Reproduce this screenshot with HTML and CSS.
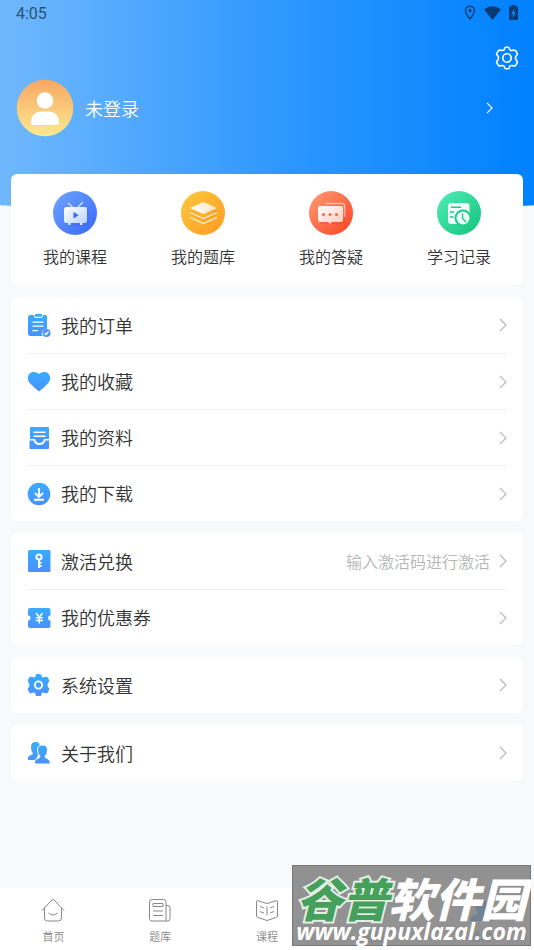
FILE: index.html
```html
<!DOCTYPE html>
<html lang="zh-CN">
<head>
<meta charset="utf-8">
<meta name="viewport" content="width=device-width, initial-scale=1">
<title>我的</title>
<link rel="stylesheet" href="styles.css">
</head>
<body>
<svg class="defs" aria-hidden="true">
  <defs>
    <linearGradient id="blue" x1="0" y1="0" x2="0" y2="24" gradientUnits="userSpaceOnUse"><stop offset="0" stop-color="#37adff"/><stop offset="1" stop-color="#4b8fff"/></linearGradient>
    <linearGradient id="avatar" x1="0" y1="0" x2="0" y2="1"><stop offset="0" stop-color="#f8a763"/><stop offset="1" stop-color="#fbea91"/></linearGradient>
    <linearGradient id="c1" x1="0" y1="0" x2="1" y2="1"><stop offset="0.1" stop-color="#6a9fff"/><stop offset="0.9" stop-color="#3d6dfc"/></linearGradient>
    <linearGradient id="c2" x1="0" y1="0" x2="1" y2="1"><stop offset="0.1" stop-color="#fdc43a"/><stop offset="0.9" stop-color="#ff9f26"/></linearGradient>
    <linearGradient id="c3" x1="0" y1="0" x2="1" y2="1"><stop offset="0.1" stop-color="#ff956c"/><stop offset="0.9" stop-color="#fb4a2b"/></linearGradient>
    <linearGradient id="c4" x1="0" y1="0" x2="1" y2="1"><stop offset="0.1" stop-color="#4be9b2"/><stop offset="0.9" stop-color="#18c880"/></linearGradient>
    <linearGradient id="w1" x1="0" y1="0" x2="1" y2="1"><stop offset="0" stop-color="#fff"/><stop offset="1" stop-color="#b9d2ff"/></linearGradient>
    <linearGradient id="w2" x1="0" y1="0" x2="1" y2="0"><stop offset="0" stop-color="#fff"/><stop offset="1" stop-color="#ffe3bd"/></linearGradient>
    <linearGradient id="w3" x1="0" y1="0" x2="1" y2="1"><stop offset="0" stop-color="#fff"/><stop offset="1" stop-color="#ffcabb"/></linearGradient>
    <symbol id="chevron" viewBox="0 0 8 14"><path d="M1 1l6 6-6 6" fill="none" stroke="currentColor" stroke-width="1.3"/></symbol>
  </defs>
</svg>

<header class="hero">
  <div class="status">
    <span>4:05</span>
    <span class="status-icons">
      <svg width="12" height="16" viewBox="0 0 12 16"><path d="M6 1.2C3.3 1.2 1.5 3.2 1.5 5.6 1.5 8.8 6 14 6 14s4.500-5.200 4.500-8.400C10.500 3.200 8.700 1.200 6 1.200z" fill="none" stroke="#063c73" stroke-width="1.400"/><circle cx="6" cy="5.600" r="1.600" fill="#063c73"/></svg>
      <svg width="17" height="16" viewBox="0 0 17 16"><path d="M0 4.500Q8.500-2 17 4.500L8.500 15z" fill="#063c73"/></svg>
      <svg width="9" height="16" viewBox="0 0 9 16"><path d="M2.500 1.500V0h4v1.500H8q1 0 1 1V14q0 1-1 1H1q-1 0-1-1V2.500q0-1 1-1z" fill="#063c73"/><path d="M5.500 3.500L2.200 9H4l-.500 4 3.300-5.500H5z" fill="#118aff"/></svg>
    </span>
  </div>
  <div class="toolbar">
    <button class="icon-button" aria-label="设置">
      <svg width="24" height="24" viewBox="0 0 24 24" fill="none" stroke="#fff" stroke-width="1.600" stroke-linejoin="round"><path d="M9.500 2.800Q9.700 1.200 11 1.200h2Q14.300 1.200 14.500 2.800 14.800 4.600 16.500 4.500L19 4.100Q20.300 4 21 5.200L22.200 7.300Q22.700 8.600 21.500 9.500 19.400 12 21.500 14.500 22.700 15.400 22.200 16.700L21 18.800Q20.300 20 19 19.900L16.500 19.500Q14.800 19.400 14.500 21.200 14.300 22.800 13 22.800H11Q9.700 22.800 9.500 21.200 9.200 19.400 7.500 19.500L5 19.900Q3.700 20 3 18.800L1.800 16.700Q1.300 15.400 2.500 14.500 4.600 12 2.500 9.500 1.300 8.600 1.800 7.300L3 5.200Q3.700 4 5 4.100L7.500 4.500Q9.200 4.600 9.500 2.800z"/><circle cx="12" cy="12" r="4.200"/></svg>
    </button>
  </div>
  <a class="profile" href="#login">
    <svg width="58" height="58" viewBox="0 0 58 58"><circle cx="29" cy="29" r="28.300" fill="url(#avatar)"/><circle cx="29" cy="21.500" r="8.300" fill="#fff"/><path d="M15 43.500C15 36 20 32.500 25 32.500h8c5 0 10 3.500 10 11q0 2.500-2.500 2.500h-23Q15 46 15 43.500z" fill="#fff"/></svg>
    <span class="name">未登录</span>
    <svg class="chevron" width="7" height="12"><use href="#chevron"/></svg>
  </a>
</header>

<main>
  <nav class="card shortcuts" aria-label="学习">
    <a href="#courses">
      <svg width="44" height="44" viewBox="0 0 44 44"><circle cx="22" cy="22" r="22" fill="url(#c1)"/><path d="M15 12l4.500 4M30 11l-5 5" stroke="#d9e6ff" stroke-width="1.200"/><rect x="13" y="18" width="23" height="17" rx="3" fill="#2c59e0" opacity=".25"/><rect x="11" y="16" width="23" height="16" rx="2" fill="url(#w1)"/><path d="M15 32h2.500v2H15zM27 32h2.500v2H27z" fill="#dce8ff"/><path d="M20.500 21v6.500l5.200-3.200z" fill="#3469f3"/></svg>
      <span>我的课程</span>
    </a>
    <a href="#questions">
      <svg width="44" height="44" viewBox="0 0 44 44"><circle cx="22" cy="22" r="22" fill="url(#c2)"/><path d="M9 19l13.500 8L36 19v4l-13.500 7L9 23z" fill="#e97c00" opacity=".25"/><path d="M22.500 11L36 17l-13.500 6L9 17z" fill="url(#w2)"/><path d="M9 21.500l13.500 6L36 21.500M9 26.500l13.500 6L36 26.500" fill="none" stroke="#fff2dd" stroke-width="1.300"/></svg>
      <span>我的题库</span>
    </a>
    <a href="#answers">
      <svg width="44" height="44" viewBox="0 0 44 44"><circle cx="22" cy="22" r="22" fill="url(#c3)"/><path d="M16 12.500h18q1.500 0 1.500 1.500v12" fill="none" stroke="#ffc0ae" stroke-width="1.500"/><rect x="11" y="17" width="25" height="16" rx="2" fill="#c92510" opacity=".15"/><path d="M11 15h21q2 0 2 2v12q0 2-2 2h-9l-2 2-2-2h-8q-2 0-2-2V17q0-2 2-2z" fill="url(#w3)"/><g fill="#f66445"><circle cx="14.500" cy="23.500" r="1.500"/><circle cx="21" cy="23.500" r="1.500"/><circle cx="27.500" cy="23.500" r="1.500"/></g></svg>
      <span>我的答疑</span>
    </a>
    <a href="#records">
      <svg width="44" height="44" viewBox="0 0 44 44"><circle cx="22" cy="22" r="22" fill="url(#c4)"/><rect x="11" y="12" width="21.500" height="21" rx="3" fill="#effff8"/><path d="M14 16.200h10M13 21h4M13 26h3.500" stroke="#20c98c" stroke-width="1.600"/><circle cx="26" cy="27" r="8.500" fill="#20cc8d"/><circle cx="26" cy="27" r="6.500" fill="#eafff6"/><path d="M25.500 22.500v5l3.500 3.500" fill="none" stroke="#20c98c" stroke-width="1.500"/></svg>
      <span>学习记录</span>
    </a>
  </nav>

  <section class="card list">
    <a class="row" href="#orders">
      <svg width="24" height="24" viewBox="0 0 24 24" fill="url(#blue)"><path d="M3.500 2H7q0 3 2 3h5q2 0 2-3h2.500Q20 2 20 3.500v12.300A4.700 4.700 0 0 0 15.500 23H3.500Q1 23 1 21V4q0-2 2.500-2z"/><path d="M8 1h2q1-1 3 0h2v2.800H8z"/><circle cx="19.500" cy="20" r="4"/><path d="M5.500 9.200h11M5.500 13.200h11M5.500 17.600H11M17.500 20l1.500 1.500 2.600-3" fill="none" stroke="#fff" stroke-width="1.300"/></svg>
      <span class="label">我的订单</span><svg class="chevron" width="8" height="14"><use href="#chevron"/></svg>
    </a>
    <a class="row" href="#favorites">
      <svg width="24" height="24" viewBox="0 0 24 24"><path d="M12 21.500Q8 18.500 3.200 13.500C-1.500 8.500 1.500 2 6.500 2Q10 2 12 4Q14 2 17.500 2C22.500 2 25.500 8.500 20.800 13.500Q16 18.500 12 21.500z" fill="url(#blue)"/></svg>
      <span class="label">我的收藏</span><svg class="chevron" width="8" height="14"><use href="#chevron"/></svg>
    </a>
    <a class="row" href="#materials">
      <svg width="24" height="24" viewBox="0 0 24 24" fill="url(#blue)"><path d="M4 1h17q1 0 1 1v11h-5q-1 4-4.500 4T8 13H3V2q0-1 1-1z"/><path d="M2.500 14.500H6.500Q8 19 12.500 19t6-4.500H22V22q0 1-1 1H3.500q-1 0-1-1z"/><path d="M6.500 6.200h12M6.500 10.200h12" stroke="#fff" stroke-width="1.500"/></svg>
      <span class="label">我的资料</span><svg class="chevron" width="8" height="14"><use href="#chevron"/></svg>
    </a>
    <a class="row" href="#downloads">
      <svg width="24" height="24" viewBox="0 0 24 24"><circle cx="12" cy="12" r="11.300" fill="url(#blue)"/><path d="M12 6v9M8 11l4 4 4-4M7 17.800h10" fill="none" stroke="#fff" stroke-width="1.900"/></svg>
      <span class="label">我的下载</span><svg class="chevron" width="8" height="14"><use href="#chevron"/></svg>
    </a>
  </section>

  <section class="card list">
    <a class="row" href="#activate">
      <svg width="24" height="24" viewBox="0 0 24 24"><rect x="1" y="1" width="22.500" height="22" rx="1.500" fill="url(#blue)"/><circle cx="12" cy="8" r="2.600" fill="none" stroke="#fff" stroke-width="2"/><path d="M12 10.500V19M12 13.800h2.500M12 17h2.500" fill="none" stroke="#fff" stroke-width="2"/></svg>
      <span class="label">激活兑换</span><span class="hint">输入激活码进行激活</span><svg class="chevron" width="8" height="14"><use href="#chevron"/></svg>
    </a>
    <a class="row" href="#coupons">
      <svg width="24" height="24" viewBox="0 0 24 24"><path d="M3 2h18.500q2 0 2 2v5.500a2.500 2.500 0 0 0 0 5V20q0 2-2 2H3q-2 0-2-2v-5.500a2.500 2.500 0 0 0 0-5V4q0-2 2-2z" fill="url(#blue)"/><path d="M9 7l3.300 4.300L15.500 7M12.300 11v6.500M8.800 11.800h7M8.800 14.500h7" fill="none" stroke="#fff" stroke-width="1.500"/></svg>
      <span class="label">我的优惠券</span><svg class="chevron" width="8" height="14"><use href="#chevron"/></svg>
    </a>
  </section>

  <section class="card list">
    <a class="row" href="#settings">
      <svg width="24" height="24" viewBox="0 0 24 24"><path d="M8.500 2.500Q8.500 1 10 1h3q1.500 0 1.500 1.500 0 2.500 2.500 1.800l1.500-.500q1.500-.500 2.200.700l1.400 2.600q.700 1.300-.500 2.100Q19.500 12 21.600 14.800q1.200.800.500 2.100l-1.400 2.600q-.700 1.200-2.200.700L17 19.700q-2.500-.700-2.500 1.800Q14.500 23 13 23h-3q-1.500 0-1.500-1.500 0-2.500-2.500-1.800l-1.500.500q-1.500.500-2.200-.700L.900 16.900q-.700-1.300.500-2.100Q3.500 12 1.400 9.200.200 8.400.900 7.100l1.400-2.600q.700-1.200 2.200-.700L6 4.300Q8.500 5 8.500 2.500z" fill="url(#blue)"/><circle cx="11.500" cy="12" r="3.600" fill="none" stroke="#fff" stroke-width="1.900"/></svg>
      <span class="label">系统设置</span><svg class="chevron" width="8" height="14"><use href="#chevron"/></svg>
    </a>
  </section>

  <section class="card list">
    <a class="row" href="#about">
      <svg width="24" height="24" viewBox="0 0 24 24" fill="url(#blue)"><path d="M4 6Q4 1 8.500 1T13 6Q13 9 11 11.500v2L9 19H1q-.800-3.500 2-4.500 3-1 3-2Q4 10 4 6z"/><path d="M10.500 9Q10.500 4 15.500 4t5 5q0 4-2.500 6.500 0 1.500 2.500 2.200Q23.500 19 23.500 23h-16Q7 18.500 10 17.700q3-.700 3-2.200Q10.500 13 10.500 9z" stroke="#fff" stroke-width="1"/></svg>
      <span class="label">关于我们</span><svg class="chevron" width="8" height="14"><use href="#chevron"/></svg>
    </a>
  </section>
</main>

<footer class="bottom">
  <nav class="tabs" aria-label="主导航">
    <a href="#home"><svg width="24" height="24" viewBox="0 0 24 24"><path d="M1 12.500L11 2q1-1 2 0l10 10.500M3.500 10v10q0 3 3 3h11q3 0 3-3V10M7.500 15q4.500 4 9 0"/></svg><span>首页</span></a>
    <a href="#bank"><svg width="24" height="24" viewBox="0 0 24 24"><path d="M4 1.500h11.500q2.500 0 2.500 2.500v19H4q-2.500 0-2.500-2.500V4q0-2.500 2.500-2.500zM18 7.500h2q2 0 2 2v11q0 2.500-2.500 2.500H18M5 5.500h10v3H5zM5 13h10M5 17.500h10"/></svg><span>题库</span></a>
    <a href="#lessons"><svg width="24" height="24" viewBox="0 0 24 24"><path d="M1.500 3.500q0-1.200 1.500-.700l9 2.700 9-2.700q1.500-.500 1.500.700V18q0 1-1 1.300L12 22.500l-9.500-3.200q-1-.300-1-1.300zM12 8.500v9M5 8.500l4 1.500M5 13.500l4 1.500M19 8.500l-4 1.500M19 13.500l-4 1.500"/></svg><span>课程</span></a>
    <a href="#ask"><svg width="24" height="24" viewBox="0 0 24 24"><path d="M3.500 2h17q2 0 2 2v14q0 2-2 2H15l-3 3-3-3H3.500q-2 0-2-2V4q0-2 2-2zM6 11h12"/></svg><span>答疑</span></a>
    <a class="active" href="#me" aria-current="page"><svg width="24" height="24" viewBox="0 0 24 24"><path d="M6 7.500Q6 1 12 1t6 6.500Q18 12 15 14q0 1.500 4 2.500 4 1 4 6.500H1q0-5.500 4-6.500 4-1 4-2.500-3-2-3-6.500z"/></svg><span>我的</span></a>
  </nav>
  <div class="watermark">
    <p class="brand"><b>谷普</b>软件园</p>
    <p class="site">www.gupuxlazal.com</p>
  </div>
</footer>
</body>
</html>
```
FILE: styles.css
```css
* { box-sizing: border-box; }
body {
  margin: 0;
  min-height: 100vh;
  display: flex;
  flex-direction: column;
  background: #f8f9fb;
  color: #333;
  font-family: "Noto Sans CJK SC", sans-serif;
  font-weight: 350;
}
a { color: inherit; text-decoration: none; }
svg { flex: none; display: block; }
.defs { position: absolute; width: 0; height: 0; }

.hero {
  height: 208px;
  background: linear-gradient(90deg, #70b8fd, #2b96ff 55%, #0081ff);
  border-radius: 0 0 50% 50% / 0 0 3px 3px;
}
.status {
  display: flex;
  justify-content: space-between;
  padding: 4px 16px 0;
  height: 28px;
  font: 400 16px/20px Roboto, sans-serif;
  color: #2c5374;
}
.status-icons { display: flex; gap: 8px; padding-top: 1px; }
.toolbar { display: flex; justify-content: flex-end; padding: 18px 15px 0; }
.icon-button { padding: 0; border: 0; background: none; cursor: pointer; }
.profile {
  display: flex;
  align-items: center;
  gap: 11px;
  padding: 9px 41px 0 16px;
  color: #fff;
  font-size: 18px;
}
.profile .name { flex: 1; }

main { flex: 1; display: flex; flex-direction: column; gap: 12px; padding: 0 11px 12px; margin-top: -34px; }
.card { background: #fff; border-radius: 6px; }
.shortcuts { display: grid; grid-template-columns: repeat(4, 1fr); padding: 17px 0 16px; }
.shortcuts a { display: flex; flex-direction: column; align-items: center; gap: 9px; font-size: 16px; line-height: 25px; }
.list { padding: 0 16px; }
.row { display: flex; align-items: center; height: 56px; font-size: 18px; }
.row + .row { border-top: 1px solid #f1f1f3; }
.label { flex: 1; padding: 0 0 1px 10px; }
.hint { margin-right: 9px; padding-bottom: 1px; font-size: 16px; color: #b5b5b5; }
.row .chevron { color: #bbb; }

.bottom { position: relative; }
.tabs { display: grid; grid-template-columns: repeat(5, 1fr); height: 62px; padding-top: 10px; background: #fff; }
.tabs a { display: flex; flex-direction: column; align-items: center; gap: 4px; font-size: 11px; line-height: 20px; color: #888; }
.tabs svg { fill: none; stroke: #888; stroke-width: 1; }
.tabs .active { color: #2491ff; }
.tabs .active svg { fill: #2491ff; stroke: none; }

.watermark {
  position: absolute;
  right: 3px;
  bottom: 4px;
  width: 239px;
  height: 81px;
  background: rgba(128, 128, 128, .86);
  border: 1px solid #777;
  color: #fff;
  text-align: center;
  white-space: nowrap;
}
.watermark p { margin: 0; }
.brand { padding-top: 8px; font-size: 46px; line-height: 46px; font-weight: 900; font-style: italic; }
.brand b { color: #44a05a; font-weight: 900; -webkit-text-stroke: 4px #e4efe6; paint-order: stroke fill; }
.site { font: italic 700 23px/22px "Open Sans", sans-serif; }
```
